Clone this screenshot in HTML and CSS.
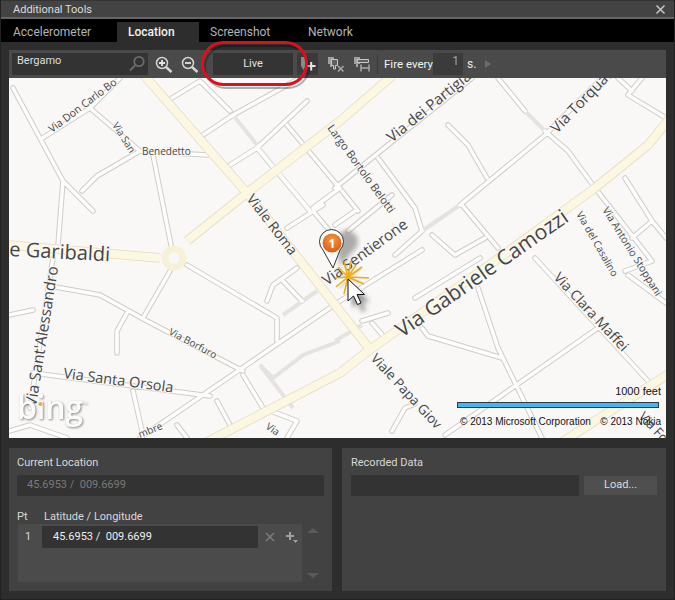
FILE: index.html
```html
<!DOCTYPE html>
<html lang="en">
<head>
<meta charset="utf-8">
<title>Additional Tools</title>
<link rel="stylesheet" href="styles.css">
</head>
<body>
<div class="window">
  <header class="titlebar">
    <span>Additional Tools</span>
    <svg class="close" width="11" height="11" viewBox="0 0 11 11"><path d="M1.5 1.5l8 8M9.5 1.5l-8 8"/></svg>
  </header>
  <nav class="tabs">
    <span class="tab t1">Accelerometer</span>
    <span class="tab t2 active">Location</span>
    <span class="tab t3">Screenshot</span>
    <span class="tab t4">Network</span>
  </nav>
  <main class="content">
    <div class="stage">
      <div class="toolbar">
        <div class="search">
          <span>Bergamo</span>
          <svg width="18" height="18" viewBox="0 0 18 18" class="ic-search"><circle cx="11" cy="6.5" r="4.7"/><path d="M7.5 10L2 15.5"/></svg>
        </div>
        <svg class="zoombtn zi" width="20" height="20" viewBox="0 0 20 20"><circle cx="8" cy="8" r="5.500"/><path class="h" d="M12 12l5.500 5"/><path class="s" d="M5 8h6M8 5v6"/></svg>
        <svg class="zoombtn zo" width="20" height="20" viewBox="0 0 20 20"><circle cx="8" cy="8" r="5.500"/><path class="h" d="M12 12l5.500 5"/><path class="s" d="M5 8h6"/></svg>
        <div class="live">Live</div>
        <div class="addbtn">
          <svg width="21" height="22" viewBox="0 0 21 22"><path class="pinic" d="M4 4h4l1 2v7l-2.500 4L4 13z"/><path class="plus" d="M10 13h8.500M14.200 9v8.500"/></svg>
        </div>
        <svg class="mini m1" width="18" height="18" viewBox="0 0 18 18"><path class="back" d="M1 2h6v7H5v3H3V9H1z"/><path class="front" d="M4.500 4.500h6v6h-2v3.500h-2v-3.500h-2z"/><path class="mark" d="M11 11l5.500 5.500M16.500 11l-5.500 5.500"/></svg>
        <svg class="mini m2" width="18" height="18" viewBox="0 0 18 18"><path class="back" d="M1 2h6v7H5v3H3V9H1z"/><path class="front" d="M4.500 4.500h11v3h-11z"/><path class="mark" d="M8 9.500v7M16 9.500v7M8 13h8"/></svg>
        <i class="sep"></i>
        <span class="fire">Fire every</span>
        <span class="fireval">1</span>
        <span class="unit">s.</span>
        <i class="play"></i>
      </div>
      <div class="map">
        <svg class="mapsvg" width="657" height="360" viewBox="9 78 657 360">
          <defs>
            <path id="minor" d="M13 88L63 181L93 211M63 181L58 245M41 139L90 108L120 78M90 108L140 151L207 155M140 151L97 176L82 191M153 155L171 245M172 98L200 81L230 111M203 135L233 115L300 78M230 165L257 148L307 101M257 148L310 211M287 125L337 185M323 205L287 228M340 188L313 208M313 211L333 235M335 188L388 145L472 78M378 158L415 208L422 231M342 191L358 211M348 231L392 195M355 211L335 225M395 255L422 231M460 205L545 135L602 78M498 78L525 111M545 131L568 151L595 188L652 261M448 125L468 145L487 178M628 95L666 118M628 95L642 78M618 78L632 91M462 205L498 248M432 235L455 255L485 238M625 178L652 221L666 238M632 238L652 221M53 258L30 408M9 315L33 310M50 286L100 295L147 321L243 371M127 313L117 331L117 353M143 318L170 271M187 265L277 318L277 341M33 373L210 396M133 391L143 435M140 438L340 301M217 401L230 425M243 375L263 408L297 421L287 438M177 425L187 438M267 301L273 285L297 268M283 281L302 301M9 431L30 425L67 438M415 298L480 258M478 288L498 348L542 438M422 328L428 336L502 358M445 435L598 328M535 258L648 381M362 321L388 313M372 323L385 338M392 431L405 408L415 404M628 275L666 303M625 271L652 261M340 301L422 250"/>
            <path id="walk" d="M233 115L310 211M525 111L545 131M422 231L460 205M283 315L317 291M260 365L273 378L303 355L340 341M260 365L293 408M230 165L257 148M335 341L362 325"/>
            <path id="major" d="M143 74L247 193L372 352M9 245L160 258M187 241L247 193L340 121L392 76M207 442L340 373L368 351L502 256L595 188L648 145L670 118M562 442L670 373"/>
            <filter id="blur3"><feGaussianBlur stdDeviation="2.500"/></filter>
            <filter id="blur1"><feGaussianBlur stdDeviation="1.200"/></filter>
            <radialGradient id="orange" cx="50%" cy="35%" r="70%"><stop offset="0" stop-color="#f59a45"/><stop offset="1" stop-color="#d9570f"/></radialGradient>
          </defs>
          <rect class="ground" x="9" y="78" width="657" height="360"/>
          <use href="#minor" class="minor-case"/>
          <use href="#walk" class="walkway"/>
          <use href="#minor" class="minor-fill"/>
          <use href="#major" class="major-case"/>
          <use href="#major" class="major-fill"/>
          <circle class="rb-case" cx="174" cy="258" r="9"/>
          <g class="labels">
            <text class="l20" transform="translate(9 256) rotate(3)">e Garibaldi</text>
            <text class="l21" transform="translate(402 338) rotate(-35)">Via Gabriele Camozzi</text>
            <text class="l15" transform="translate(327 286) rotate(-36)">Via Sentierone</text>
            <text class="l15" transform="translate(392 143) rotate(-39)">Via dei Partigiani</text>
            <text class="l15" transform="translate(557 134) rotate(-46)">Via Torquato</text>
            <text class="l14" transform="translate(246 199) rotate(52)">Viale Roma</text>
            <text class="l135" transform="translate(370 359) rotate(47)">Viale Papa Giov</text>
            <text class="l14" transform="translate(553 278) rotate(47)">Via Clara Maffei</text>
            <text class="l155" transform="translate(36 407) rotate(-81)">Via Sant'Alessandro</text>
            <text class="l145" transform="translate(63 378) rotate(7.500)">Via Santa Orsola</text>
            <text class="l10" transform="translate(168 334) rotate(28)">Via Borfuro</text>
            <text class="l10" transform="translate(142 155)">Benedetto</text>
            <text class="l105" transform="translate(52 133) rotate(-37)">Via Don Carlo Bo</text>
            <text class="l10" transform="translate(112 125) rotate(58)">Via San</text>
            <text class="l11" transform="translate(327 128) rotate(54)">Largo Bortolo Belotti</text>
            <text class="l10" transform="translate(576 214) rotate(60)">Via del Casalino</text>
            <text class="l105" transform="translate(602 210) rotate(58)">Via Antonio Stoppani</text>
            <text class="l13" transform="translate(638 417) rotate(47)">Via Fo</text>
            <text class="l10" transform="translate(140 438) rotate(-22)">mbre</text>
            <text class="l10" transform="translate(265 428) rotate(35)">Via</text>
          </g>
          <g class="bing">
            <text class="bingtext" x="17" y="419">bing<tspan class="bingtm" dy="-13">™</tspan></text>
            <circle class="bingdot" cx="40.500" cy="404" r="2"/>
          </g>
          <g>
            <path class="shadow" d="M336 240a11 11 0 1 1 18 10l-14 16z" filter="url(#blur3)"/>
            <path class="pintail" d="M323 250a12 12 0 1 1 17 0l-7 18z"/>
            <circle class="pinhead" cx="332" cy="243" r="9.500"/>
            <text class="pinnum" x="332" y="247.500">1</text>
            <path class="starshadow" d="M335 271L360 283M345 262L352 292M361 268L340 288" filter="url(#blur1)"/>
            <path class="star" d="M348 277L338 267M348 277L344 262M348 277L351 261M348 277L356 265M348 277L362 267M348 277L369 278M348 277L364 284M348 277L354 291M348 277L344 294M348 277L336 287M348 277L335 278"/>
            <path class="curshadow" d="M352 285v23l6-5 4 9 4-2-4-8h8z" filter="url(#blur3)"/>
            <path class="cursor" d="M348 279v22l5.500-5 4 8.500 3.500-1.500-4-8.500h7.500z"/>
          </g>
        </svg>
        <div class="scale">
          <span class="feet">1000 feet</span>
          <i class="bar"></i>
          <div class="copy"><span>© 2013 Microsoft Corporation</span><span>© 2013 Nokia</span></div>
        </div>
      </div>
      <svg class="callout" width="122" height="56" viewBox="0 0 122 56">
        <rect class="callshadow" x="6" y="7" width="104" height="42" rx="21"/>
        <rect class="callring" x="3.500" y="3.500" width="104" height="42" rx="21"/>
      </svg>
    </div>
    <div class="panels">
      <section class="panel">
        <h2>Current Location</h2>
        <div class="field dim">45.6953 /&nbsp; 009.6699</div>
        <div class="cols"><span class="pt">Pt</span><span>Latitude / Longitude</span></div>
        <div class="listrow">
          <div class="list">
            <span class="num">1</span>
            <div class="coord">45.6953 /&nbsp; 009.6699</div>
            <svg class="lx" width="10" height="10" viewBox="0 0 10 10"><path d="M1 1l8 8M9 1l-8 8"/></svg>
            <svg class="lp" width="14" height="14" viewBox="0 0 14 14"><path class="pp" d="M1 6h8M5 2v8"/><path class="pt2" d="M8 10h5l-2.500 3z"/></svg>
          </div>
          <div class="updown"><i class="up"></i><i class="down"></i></div>
        </div>
      </section>
      <section class="panel right">
        <h2>Recorded Data</h2>
        <div class="loadrow"><div class="field grow"></div><div class="load">Load...</div></div>
      </section>
    </div>
  </main>
</div>
</body>
</html>
```
FILE: styles.css
```css
* { box-sizing: border-box; }
html, body { margin: 0; padding: 0; }
body { width: 675px; height: 600px; overflow: hidden; background: #2d2d2d; font-family: Roboto, "Liberation Sans", sans-serif; font-size: 11px; color: #d8d8d8; }
.window { width: 675px; height: 600px; display: flex; flex-direction: column; background: #2d2d2d; border-left: 1px solid #222; border-right: 1px solid #222; border-bottom: 1px solid #222; }
.titlebar { height: 19px; flex: none; padding: 0 8px 0 12px; display: flex; align-items: center; justify-content: space-between; background: #434343; border-top: 1px solid #333; border-bottom: 2px solid #666; color: #ddd; }
.close path { stroke: #c8c8c8; stroke-width: 1.500; fill: none; }
.tabs { height: 23px; flex: none; background: #000; display: flex; align-items: flex-end; font-size: 12px; }
.tab { height: 20px; line-height: 20px; color: #b4b4b4; }
.t1 { width: 116px; padding-left: 12px; }
.t2 { width: 82px; padding-left: 11px; }
.t3 { padding-left: 11px; width: 109px; }
.t4 { padding-left: 0; }
.tab.active { background: #2d2d2d; color: #f2f2f2; font-weight: 500; }
.content { flex: 1; padding: 8px 8px 8px; display: flex; flex-direction: column; gap: 10px; }
.stage { position: relative; flex: none; }
.toolbar { height: 28px; background: #4a4a4a; display: flex; align-items: center; padding: 0 3px; color: #eee; }
.search { width: 136px; height: 22px; background: #333; padding: 0 0 0 5px; display: flex; justify-content: space-between; align-items: flex-start; line-height: 16px; color: #dedede; flex: none; }
.ic-search { margin: 2px 2px 0 0; }
.ic-search circle, .ic-search path { fill: none; stroke: #6b6b6b; stroke-width: 1.800; }
.zoombtn { flex: none; margin-top: 2px; }
.zi { margin-left: 6px; }
.zo { margin-left: 6px; }
.zoombtn circle { fill: none; stroke: #d5d5d5; stroke-width: 1.500; }
.zoombtn .h { stroke: #d5d5d5; stroke-width: 2.500; fill: none; }
.zoombtn .s { stroke: #e6e6e6; stroke-width: 1.800; fill: none; }
.live { width: 80px; height: 22px; line-height: 22px; margin-left: 13px; background: #343434; text-align: center; color: #e2e2e2; flex: none; }
.addbtn { width: 21px; height: 22px; margin-left: 4px; background: #3a3a3a; flex: none; }
.pinic { fill: #8a8a8a; }
.plus { stroke: #e6e6e6; stroke-width: 2; fill: none; }
.mini { flex: none; }
.m1 { margin-left: 9px; }
.m2 { margin-left: 8px; }
.back { fill: #a0a0a0; }
.front { fill: #5f5f5f; stroke: #c8c8c8; stroke-width: 1; }
.mark { stroke: #a8a8a8; stroke-width: 1.500; fill: none; }
.sep { width: 1px; height: 20px; background: #3a3a3a; margin-left: 6px; flex: none; }
.fire { margin-left: 6px; width: 49px; flex: none; color: #f2f2f2; white-space: nowrap; font-size: 11.500px; }
.fireval { width: 30px; height: 22px; background: #3b3b3b; color: #8fa6c8; font-size: 12px; text-align: right; padding-right: 4px; line-height: 16px; flex: none; }
.unit { margin-left: 4px; color: #e8e8e8; flex: none; font-size: 12px; }
.play { width: 0; height: 0; margin-left: 9px; border-left: 6px solid #6c6c6c; border-top: 4px solid transparent; border-bottom: 4px solid transparent; flex: none; }
.map { height: 360px; position: relative; overflow: hidden; }
.mapsvg { display: block; }
.ground { fill: #f9f8f6; }
.minor-case { fill: none; stroke: #cfcdca; stroke-width: 5.500; stroke-linecap: round; stroke-linejoin: round; }
.minor-fill { fill: none; stroke: #fdfdfc; stroke-width: 3.500; stroke-linecap: round; stroke-linejoin: round; }
.walkway { fill: none; stroke: #e4e3e0; stroke-width: 4; }
.major-case { fill: none; stroke: #e4dcc4; stroke-width: 9.500; stroke-linejoin: round; }
.major-fill { fill: none; stroke: #fcf7e0; stroke-width: 8; stroke-linejoin: round; }
.rb-case { fill: #f9f8f6; stroke: #f7f1d8; stroke-width: 7; }
.labels text { font-family: "Open Sans", sans-serif; fill: #454545; paint-order: stroke; stroke: #f9f8f6; stroke-width: 2px; stroke-linejoin: round; }
.l21 { font-size: 21px; }
.l20 { font-size: 20px; }
.l155 { font-size: 15.500px; }
.l15 { font-size: 15px; }
.l145 { font-size: 14.500px; }
.l14 { font-size: 14px; }
.l135 { font-size: 13.500px; }
.l13 { font-size: 13px; }
.l11 { font-size: 11px; }
.l105 { font-size: 10.500px; }
.l10 { font-size: 10px; }
.bing text { font-family: "Open Sans", sans-serif; font-size: 32px; font-weight: 600; letter-spacing: -.3px; }
.bingtext { fill: #fbfbfb; filter: drop-shadow(1px 1px 1px #8a8a8a); }
.bingtext .bingtm { font-size: 6px; font-weight: 400; letter-spacing: 0; }
.bingdot { fill: #f2a83a; }
.shadow { fill: #777; opacity: .6; }
.pintail { fill: #fff; stroke: #333; stroke-width: 1; }
.pinhead { fill: url(#orange); }
.pinnum { font-family: "Open Sans", sans-serif; font-size: 12px; font-weight: 700; fill: #fff; text-anchor: middle; }
.starshadow { stroke: #999; stroke-width: 1.500; fill: none; opacity: .5; }
.star { stroke: #ecae14; stroke-width: 1.600; fill: none; }
.curshadow { fill: #555; opacity: .6; }
.cursor { fill: #fff; stroke: #111; stroke-width: 1; stroke-linejoin: round; }
.scale { position: absolute; right: 3px; bottom: 10px; width: 205px; display: flex; flex-direction: column; align-items: stretch; color: #111; font-family: "Liberation Sans", sans-serif; }
.feet { text-align: right; font-size: 11px; line-height: 14px; margin-bottom: 4px; margin-right: 2px; }
.bar { display: block; height: 6px; margin-right: 4px; margin-left: -1px; background: #45b5f0; border: 1px solid #2f3a42; }
.copy { display: flex; justify-content: space-between; font-size: 10px; line-height: 12px; margin-top: 8px; padding-left: 2px; margin-right: 2px; white-space: nowrap; }
.callout { position: absolute; left: 190px; top: -11px; }
.callring { fill: none; stroke: #d8121c; stroke-width: 3; }
.callshadow { fill: none; stroke: #000; stroke-width: 2; opacity: .3; }
.panels { display: flex; gap: 10px; height: 143px; flex: none; }
.panel { width: 323px; background: #424242; padding: 7px 8px; color: #d8d8d8; }
.panel.right { width: 324px; padding-left: 9px; }
.panel h2 { margin: 0; font: inherit; line-height: 15px; }
.field { height: 21px; margin-top: 5px; background: #333; line-height: 20px; padding-left: 10px; }
.dim { color: #7a7a7a; }
.cols { display: flex; margin-top: 14px; line-height: 14px; }
.pt { width: 27px; }
.listrow { display: flex; margin-top: 0; }
.list { width: 285px; height: 58px; margin-left: 1px; background: #4b4b4b; padding: 2px 0 0 7px; display: flex; align-items: flex-start; }
.num { width: 17px; line-height: 22px; }
.coord { width: 216px; height: 22px; background: #333; color: #eee; padding-left: 11px; line-height: 22px; flex: none; }
.lx { margin: 6px 0 0 7px; }
.lx path { stroke: #7e7e7e; stroke-width: 1.500; fill: none; }
.lp { margin: 4px 0 0 10px; }
.pp { stroke: #a0a0a0; stroke-width: 2; fill: none; }
.pt2 { fill: #a0a0a0; }
.updown { width: 22px; height: 58px; display: flex; flex-direction: column; justify-content: space-between; align-items: center; padding: 4px 0 4px; }
.up { width: 0; height: 0; border-left: 6px solid transparent; border-right: 6px solid transparent; border-bottom: 5px solid #5a5a5a; }
.down { width: 0; height: 0; border-left: 6px solid transparent; border-right: 6px solid transparent; border-top: 5px solid #5a5a5a; }
.loadrow { display: flex; gap: 5px; align-items: flex-start; }
.grow { width: 228px; flex: none; }
.load { width: 73px; height: 19px; margin-top: 6px; background: #4f4f4f; text-align: center; line-height: 18px; color: #dcdcdc; }
```
